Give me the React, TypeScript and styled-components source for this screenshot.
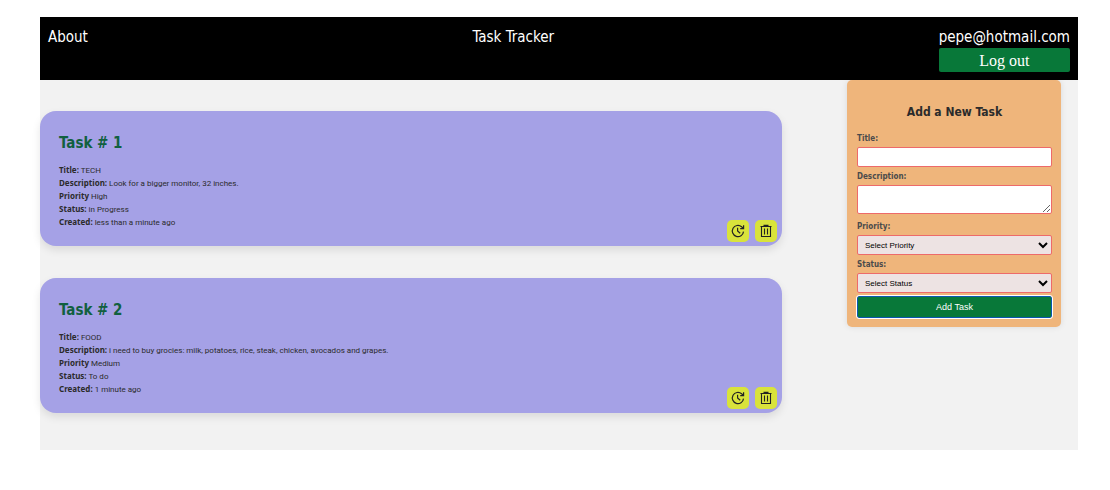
import React from "react";
import styled, { createGlobalStyle } from "styled-components";

const GlobalStyle = createGlobalStyle`
  *, *::before, *::after { box-sizing: border-box; }
  body {
    margin: 0;
    padding: 17px 32px 40px 40px;
    background: #ffffff;
    color: #2b2b2b;
    font-family: "DejaVu Sans Condensed", sans-serif;
  }
`;

const Page = styled.div`
  background: #f2f2f2;
`;

const Header = styled.header`
  display: flex;
  justify-content: space-between;
  align-items: flex-start;
  padding: 10px 8px 8px;
  background: #000000;
  color: #ffffff;
  font-size: 15px;
  line-height: 21px;
`;

const NavLink = styled.a`
  color: #ffffff;
  text-decoration: none;
`;

const Account = styled.div`
  display: flex;
  flex-direction: column;
`;

const LogoutButton = styled.button`
  height: 24px;
  padding: 1px 0 0;
  border: 0;
  border-radius: 2px;
  background: #087839;
  color: #ffffff;
  font: 16px/23px "Liberation Serif", serif;
`;

const Main = styled.main`
  display: grid;
  grid-template-columns: minmax(0, 1fr) 214px;
  align-items: start;
  column-gap: 65px;
  padding-right: 17px;
`;

const TaskList = styled.div`
  display: grid;
  gap: 32px;
  padding: 31px 0 37px;
`;

const Card = styled.article`
  position: relative;
  padding: 21px 19px 17px;
  border-radius: 16px;
  background: #a5a1e6;
  box-shadow: 0 4px 8px rgba(0, 0, 0, 0.1);
`;

const CardTitle = styled.h2`
  margin: 0 0 10px;
  color: #11603f;
  font-size: 15px;
  line-height: 22px;
`;

const Line = styled.p`
  margin: 0;
  font-family: Roboto, sans-serif;
  font-size: 8px;
  line-height: 13px;

  strong {
    font-family: "Noto Sans", sans-serif;
    line-height: 8px;
  }
`;

const Actions = styled.div`
  position: absolute;
  right: 5px;
  bottom: 4px;
  display: flex;
  gap: 6px;
`;

const IconButton = styled.button`
  display: grid;
  place-items: center;
  width: 22px;
  height: 22px;
  padding: 0;
  border: 0;
  border-radius: 5px;
  background: #d9e33b;
  color: #222222;
`;

const Form = styled.form`
  display: flex;
  flex-direction: column;
  padding: 22px 9px 9px 10px;
  border-radius: 5px;
  background: #efb57b;
  box-shadow: 0 0 6px rgba(0, 0, 0, 0.1);
`;

const FormTitle = styled.h2`
  margin: 0 0 10px;
  font-size: 12px;
  line-height: 20px;
  text-align: center;
`;

const Label = styled.label`
  margin-bottom: 1px;
  color: #4b4b4b;
  font-size: 8px;
  font-weight: bold;
  line-height: 14px;
`;

const controlStyle = `
  display: block;
  width: 100%;
  margin: 0 0 3px;
  border: 1px solid #ed6a6a;
  border-radius: 2px;
  font: 8px "Liberation Sans", sans-serif;
`;

const TextInput = styled.input`
  ${controlStyle}
  height: 20px;
  padding: 0 4px;
  background: #ffffff;
`;

const TextArea = styled.textarea`
  ${controlStyle}
  height: 29px;
  margin-bottom: 6px;
  padding: 4px;
  background: #ffffff;
`;

const Select = styled.select`
  ${controlStyle}
  height: 20px;
  padding: 0 3px;
  background: #ede3e3;
  color: #000000;
`;

const SubmitButton = styled.button`
  height: 22px;
  border: 1px solid #0b57b0;
  border-radius: 2px;
  outline: 1px solid #ffffff;
  background: #087839;
  color: #ffffff;
  font: 9px "Liberation Sans", sans-serif;
`;

const UpdateIcon = () => (
  <svg width="14" height="14" viewBox="0 0 14 14" fill="none" stroke="currentColor" strokeWidth="1.2" aria-hidden="true">
    <path d="M12.5 7.6A5.6 5.6 0 1 1 10.6 2.8L12.4 4.4M12.6 1.2V4.6H9.2M6.6 3.7V7L9.2 9.2" />
  </svg>
);

const TrashIcon = () => (
  <svg width="14" height="14" viewBox="0 0 14 14" fill="none" stroke="currentColor" strokeWidth="1.1" aria-hidden="true">
    <path d="M1.5 2.5H12.5M4.5 1.4H9.5M2.5 2.5V12.5H11.5V2.5M5.5 4.5V10.5M8.5 4.5V10.5" />
  </svg>
);

const tasks = [
  {
    id: 1,
    title: "TECH",
    description: "Look for a bigger monitor, 32 inches.",
    priority: "High",
    status: "in Progress",
    created: "less than a minute ago",
  },
  {
    id: 2,
    title: "FOOD",
    description: "i need to buy grocies: milk, potatoes, rice, steak, chicken, avocados and grapes.",
    priority: "Medium",
    status: "To do",
    created: "1 minute ago",
  },
];

export default function App() {
  return (
    <>
      <GlobalStyle />
      <Page>
        <Header>
          <NavLink href="#about">About</NavLink>
          <NavLink href="#home">Task Tracker</NavLink>
          <Account>
            <span>pepe@hotmail.com</span>
            <LogoutButton type="button">Log out</LogoutButton>
          </Account>
        </Header>
        <Main>
          <TaskList>
            {tasks.map((task) => (
              <Card key={task.id}>
                <CardTitle>Task # {task.id}</CardTitle>
                <Line><strong>Title:</strong> {task.title}</Line>
                <Line><strong>Description:</strong> {task.description}</Line>
                <Line><strong>Priority</strong> {task.priority}</Line>
                <Line><strong>Status:</strong> {task.status}</Line>
                <Line><strong>Created:</strong> {task.created}</Line>
                <Actions>
                  <IconButton type="button" aria-label="Update task"><UpdateIcon /></IconButton>
                  <IconButton type="button" aria-label="Delete task"><TrashIcon /></IconButton>
                </Actions>
              </Card>
            ))}
          </TaskList>
          <Form onSubmit={(event) => event.preventDefault()}>
            <FormTitle>Add a New Task</FormTitle>
            <Label htmlFor="title">Title:</Label>
            <TextInput id="title" type="text" />
            <Label htmlFor="description">Description:</Label>
            <TextArea id="description" />
            <Label htmlFor="priority">Priority:</Label>
            <Select id="priority">
              <option>Select Priority</option>
              <option>Low</option>
              <option>Medium</option>
              <option>High</option>
            </Select>
            <Label htmlFor="status">Status:</Label>
            <Select id="status">
              <option>Select Status</option>
              <option>To do</option>
              <option>in Progress</option>
              <option>Done</option>
            </Select>
            <SubmitButton type="submit">Add Task</SubmitButton>
          </Form>
        </Main>
      </Page>
    </>
  );
}
